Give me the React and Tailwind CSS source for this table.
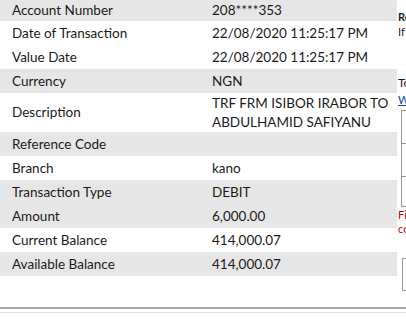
import React from 'react'

const rows = [
  { label: 'Account Number', value: '208****353', gray: true, h: 'h-[21px]' },
  { label: 'Date of Transaction', value: '22/08/2020 11:25:17 PM' },
  { label: 'Value Date', value: '22/08/2020 11:25:17 PM' },
  { label: 'Currency', value: 'NGN', gray: true },
  { label: 'Description', value: 'TRF FRM ISIBOR IRABOR TO ABDULHAMID SAFIYANU', h: 'h-[39px]' },
  { label: 'Reference Code', value: '', gray: true },
  { label: 'Branch', value: 'kano' },
  { label: 'Transaction Type', value: 'DEBIT', gray: true },
  { label: 'Amount', value: '6,000.00', gray: true },
  { label: 'Current Balance', value: '414,000.07' },
  { label: 'Available Balance', value: '414,000.07', gray: true },
]

const App = () => {
  return (
    <div className="w-[406px] h-[327px] overflow-hidden bg-white text-[#1a1a1a]" style={{ fontFamily: 'Lato, "Open Sans", sans-serif' }}>
      <div className="flex items-start h-[290px]">
        <div className="w-[397px] shrink-0">
          {rows.map((r) => (
            <div key={r.label} className={`flex items-center ${r.h || 'h-6'} ${r.gray ? 'bg-[#e6e6e6]' : 'bg-white'} text-[13.5px] leading-[19px]`}>
              <div className="w-[200px] pl-3 shrink-0">{r.label}</div>
              <div className="pl-3 w-[197px]">{r.value}</div>
            </div>
          ))}
        </div>
        <div className="ml-[1px] w-[200px] shrink-0 text-[11px] leading-[14px]">
          <div className="mt-[10px] font-bold whitespace-nowrap">Receipt Details</div>
          <div className="mt-[1px] whitespace-nowrap">If you have any questions</div>
          <div className="mt-[37px] text-[12px] whitespace-nowrap">To view more</div>
          <div className="mt-[3px] text-[#0645ad] underline whitespace-nowrap">Want a statement?</div>
          <div className="mt-[3px] ml-[3px] border border-[#9a9a9a] w-[150px]">
            <div className="h-[32px]"></div>
            <div className="h-[33px] border-t border-[#9a9a9a]"></div>
            <div className="h-[30px] border-t border-[#9a9a9a]"></div>
          </div>
          <div className="mt-[1px] text-[#c00000] whitespace-nowrap">Fields marked are</div>
          <div className="text-[#c00000] whitespace-nowrap">compulsory</div>
          <div className="mt-[22px] ml-[4px] h-[33px] w-[150px] border border-[#9a9a9a]"></div>
        </div>
      </div>
      <div className="mt-[17px] h-[2px] bg-[#a6a6a6]"></div>
      <div className="mt-[3px] h-px bg-[#e3e3e3]"></div>
    </div>
  )
}

export default App
